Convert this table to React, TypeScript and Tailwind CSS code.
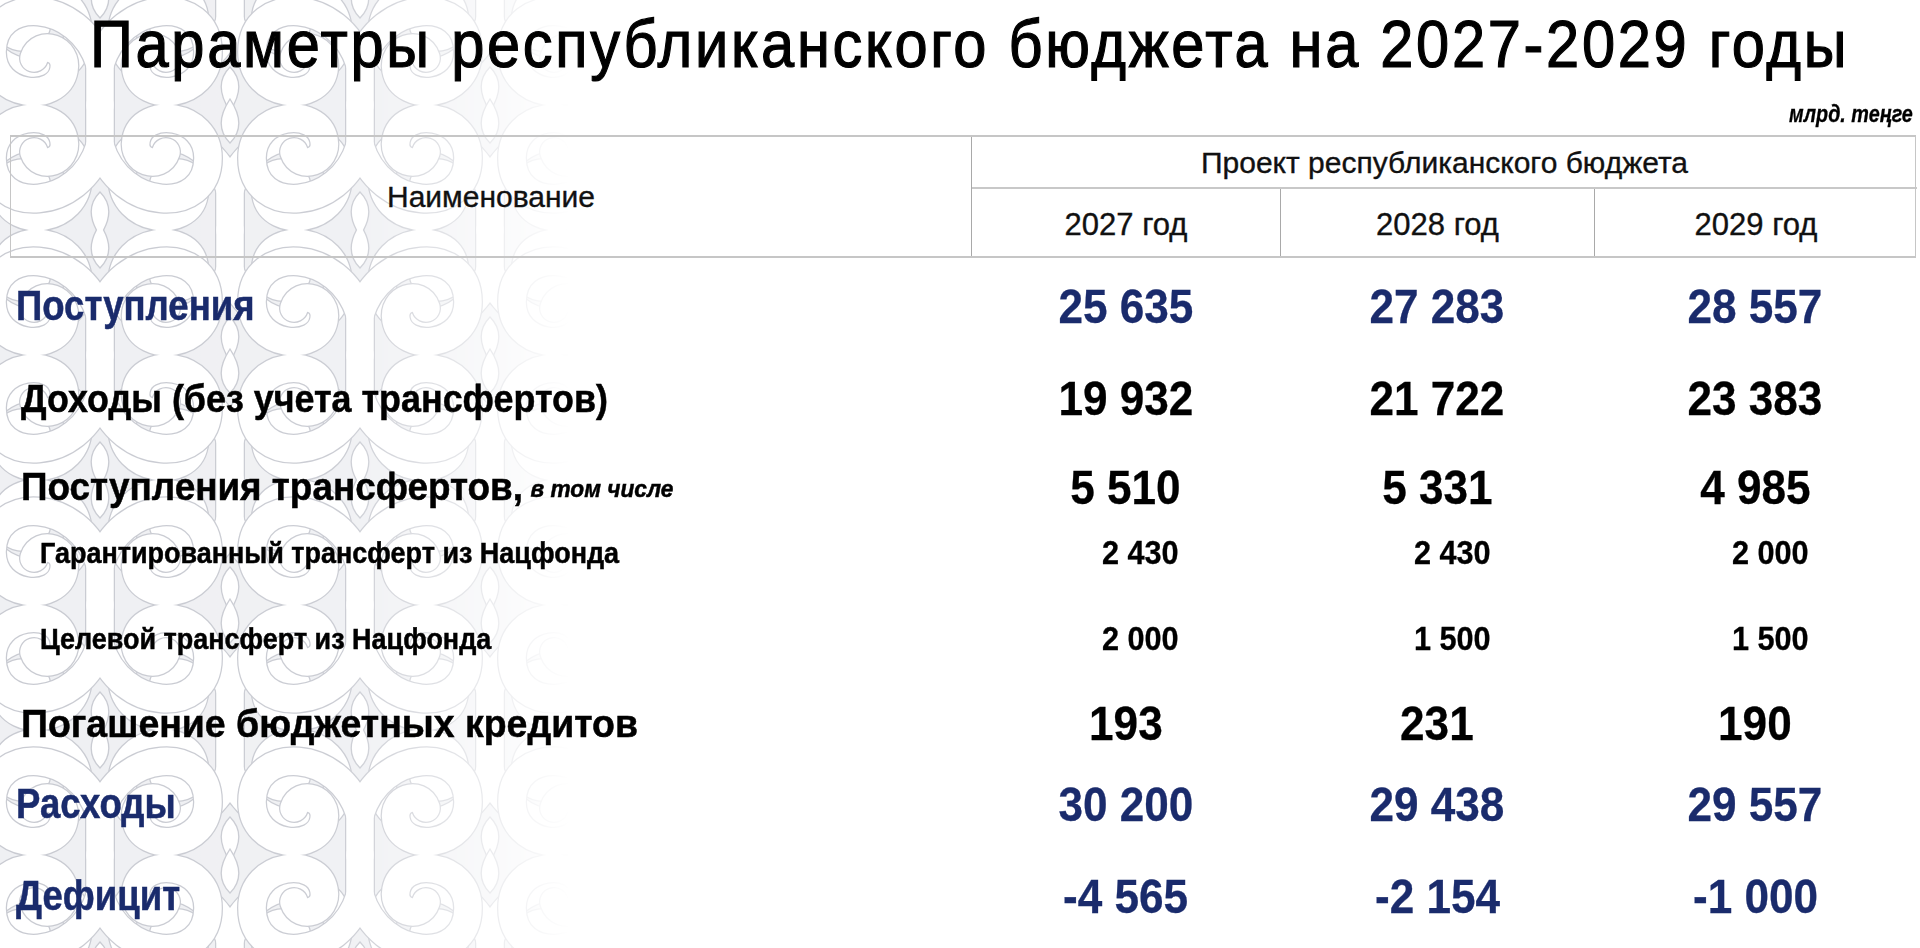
import React from "react";

function Motif() {
  const paths = [
    "M130 125 L130 84",
    "M130 84 C110 18 22 14 22 72 C22 118 88 124 94 90 C98 68 70 60 64 78",
    "M130 84 C150 18 238 14 238 72 C238 118 172 124 166 90 C162 68 190 60 196 78",
    "M130 125 L130 166",
    "M130 166 C110 232 22 236 22 178 C22 132 88 126 94 160 C98 182 70 190 64 172",
    "M130 166 C150 232 238 236 238 178 C238 132 172 126 166 160 C162 182 190 190 196 172",
  ];
  const leaves = [
    "M130 -6 C118 12 118 26 130 38 C142 26 142 12 130 -6 Z",
    "M130 256 C118 238 118 224 130 212 C142 224 142 238 130 256 Z",
  ];
  return (
    <g>
      {paths.map((d, i) => (
        <path key={"o" + i} d={d} fill="none" stroke="#c9cbd2" strokeWidth={30} strokeLinecap="round" />
      ))}
      {paths.map((d, i) => (
        <path key={"i" + i} d={d} fill="none" stroke="#ffffff" strokeWidth={27.5} strokeLinecap="round" />
      ))}
      {leaves.map((d, i) => (
        <path key={"l" + i} d={d} fill="#ffffff" stroke="#c9cbd2" strokeWidth={1.3} />
      ))}
    </g>
  );
}

function Ornament() {
  return (
    <svg className="absolute left-0 top-0" width="620" height="948" viewBox="0 0 620 948">
      <defs>
        <pattern id="orn" x="-30" y="-20" width="260" height="250" patternUnits="userSpaceOnUse">
          <rect width="260" height="250" fill="#eff0f3" />
          <g transform="translate(-130,-125)"><Motif /></g>
          <g transform="translate(130,-125)"><Motif /></g>
          <g transform="translate(-130,125)"><Motif /></g>
          <g transform="translate(130,125)"><Motif /></g>
          <Motif />
        </pattern>
        <linearGradient id="fadeg" x1="0" y1="0" x2="1" y2="0">
          <stop offset="0" stopColor="#fff" stopOpacity="1" />
          <stop offset="0.55" stopColor="#fff" stopOpacity="0.95" />
          <stop offset="0.8" stopColor="#fff" stopOpacity="0.35" />
          <stop offset="0.92" stopColor="#fff" stopOpacity="0" />
        </linearGradient>
        <mask id="fadem">
          <rect width="620" height="948" fill="url(#fadeg)" />
        </mask>
      </defs>
      <rect width="620" height="948" fill="url(#orn)" mask="url(#fadem)" />
    </svg>
  );
}

type Row = {
  label: string;
  extra?: string;
  values: string[];
  kind: "blue" | "big" | "small";
  mt: string;
  sx: string;
};

const rows: Row[] = [
  { label: "Поступления", values: ["25 635", "27 283", "28 557"], kind: "blue", mt: "mt-[25px]", sx: "scale-x-[0.87]" },
  { label: "Доходы (без учета трансфертов)", values: ["19 932", "21 722", "23 383"], kind: "big", mt: "mt-[46px]", sx: "scale-x-[0.92]" },
  { label: "Поступления трансфертов,", extra: "в том числе", values: ["5 510", "5 331", "4 985"], kind: "big", mt: "mt-[43px]", sx: "scale-x-[0.945]" },
  { label: "Гарантированный трансферт из Нацфонда", values: ["2 430", "2 430", "2 000"], kind: "small", mt: "mt-[27px]", sx: "scale-x-[0.93]" },
  { label: "Целевой трансферт из Нацфонда", values: ["2 000", "1 500", "1 500"], kind: "small", mt: "mt-[54px]", sx: "scale-x-[0.93]" },
  { label: "Погашение бюджетных кредитов", values: ["193", "231", "190"], kind: "big", mt: "mt-[45px]", sx: "scale-x-[0.96]" },
  { label: "Расходы", values: ["30 200", "29 438", "29 557"], kind: "blue", mt: "mt-[35px]", sx: "scale-x-[0.87]" },
  { label: "Дефицит", values: ["-4 565", "-2 154", "-1 000"], kind: "blue", mt: "mt-[46px]", sx: "scale-x-[0.87]" },
];

function DataRow({ r }: { r: Row }) {
  const labelCls =
    r.kind === "blue"
      ? "ml-[6px] text-[42px] leading-[42px] text-[#1a2b6c]"
      : r.kind === "big"
      ? "ml-[11px] text-[39px] leading-[39px] text-black"
      : "ml-[30px] text-[29px] leading-[29px] text-black";
  const valCls =
    r.kind === "blue"
      ? "text-[49px] leading-[46px] text-[#1a2b6c] scale-x-[0.9]"
      : r.kind === "big"
      ? "text-[49px] leading-[46px] text-black scale-x-[0.9]"
      : "text-[33px] leading-[32px] text-black scale-x-[0.93]";
  const h = r.kind === "small" ? "h-[32px]" : "h-[46px]";
  return (
    <div className={`grid grid-cols-[961px_309px_314px_322px] items-center ${h} ${r.mt}`}>
      <div className="flex">
        <div
          className={`origin-left font-['Liberation_Sans',Arial,sans-serif] font-bold whitespace-nowrap [-webkit-text-stroke:0.5px_currentColor] ${r.sx} ${labelCls}`}
        >
          {r.label}
          {r.extra && <span className="ml-[8px] text-[24px] italic align-[3px]">{r.extra}</span>}
        </div>
      </div>
      {r.values.map((v, i) => (
        <div key={i} className={`flex justify-center ${r.kind === "small" ? "pl-[30px]" : ""}`}>
          <span
            className={`inline-block font-['Liberation_Sans',Arial,sans-serif] font-bold whitespace-nowrap [-webkit-text-stroke:0.3px_currentColor] ${valCls}`}
          >
            {v}
          </span>
        </div>
      ))}
    </div>
  );
}

export default function App() {
  return (
    <div className="relative w-[1920px] h-[948px] overflow-hidden bg-white">
      <Ornament />
      <div className="relative flex flex-col">
        <div className="pt-[11px] pl-[90px] flex">
          <h1 className="origin-left scale-x-[0.89] font-['Liberation_Sans',Arial,sans-serif] text-[67px] leading-[66px] tracking-[3px] text-black font-normal whitespace-nowrap [-webkit-text-stroke:1.2px_black]">
            Параметры республиканского бюджета на 2027-2029 годы
          </h1>
        </div>
        <div className="mt-[27px] h-[20px] flex justify-end pr-[7px]">
          <span className="origin-right scale-x-[0.86] font-['Liberation_Sans',Arial,sans-serif] font-bold italic text-[23px] leading-[20px] text-black [-webkit-text-stroke:0.3px_black]">
            млрд. теңге
          </span>
        </div>
        <div className="mt-[11px] ml-[10px] w-[1906px] grid grid-cols-[961px_309px_314px_322px] grid-rows-[50px_2px_67px] border-t-2 border-b-2 border-x border-[#c6c6c6] font-['Liberation_Sans',Arial,sans-serif] text-[#111] [-webkit-text-stroke:0.35px_#111]">
          <div className="row-span-3 border-r border-[#a9a9a9] flex items-center justify-center text-[30px]">
            Наименование
          </div>
          <div className="col-span-3 flex items-center justify-center text-[30px]">
            Проект республиканского бюджета
          </div>
          <div className="col-span-3 bg-[#c8c8c8]" />
          <div className="flex items-center justify-center pt-[6px] text-[31px] border-r border-[#a9a9a9]">2027 год</div>
          <div className="flex items-center justify-center pt-[6px] text-[31px] border-r border-[#a9a9a9]">2028 год</div>
          <div className="flex items-center justify-center pt-[6px] text-[31px]">2029 год</div>
        </div>
        <div className="ml-[10px] flex flex-col">
          {rows.map((r, i) => (
            <DataRow key={i} r={r} />
          ))}
        </div>
      </div>
    </div>
  );
}
